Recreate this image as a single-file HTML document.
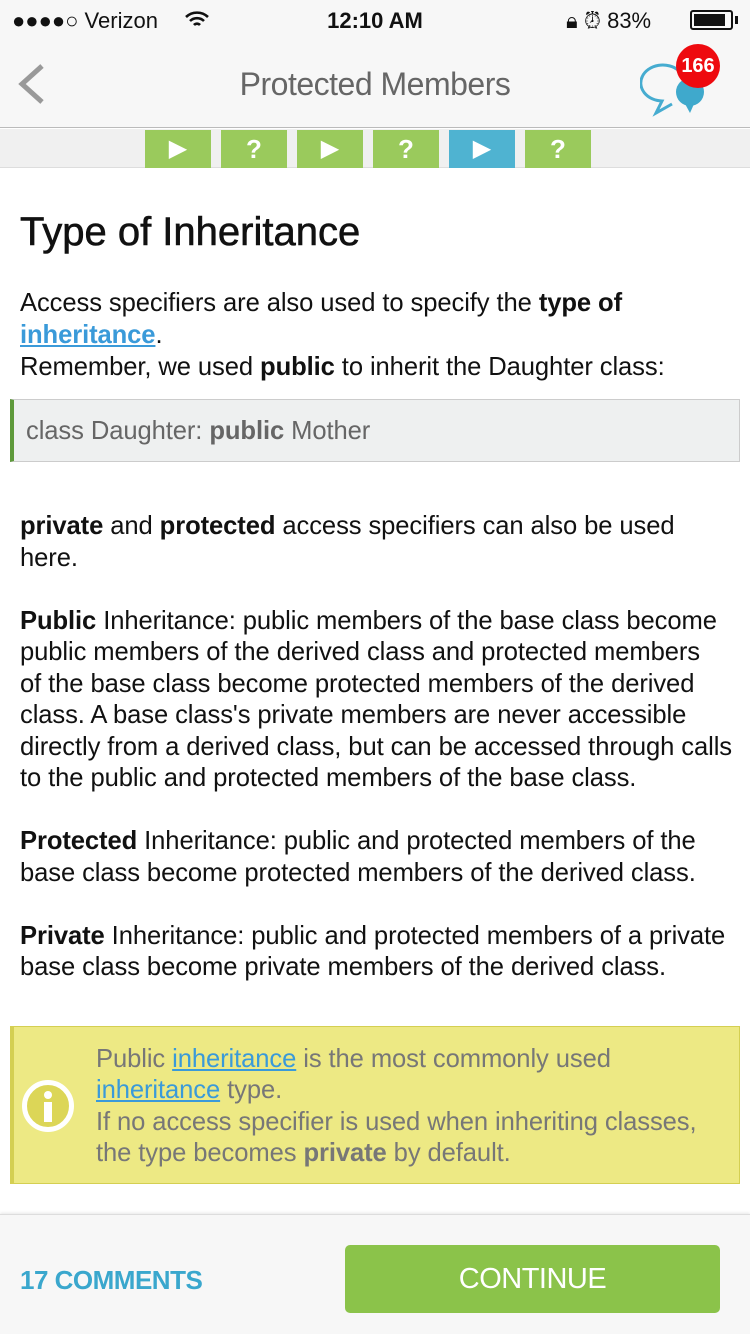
<!DOCTYPE html>
<html><head><meta charset="utf-8"><style>
*{margin:0;padding:0;box-sizing:border-box}
body{width:750px;height:1334px;position:relative;background:#fff;font-family:"Liberation Sans",sans-serif;overflow:hidden;color:#111}
.l{position:absolute;left:20px;white-space:nowrap;font-size:25.6px;line-height:32px;letter-spacing:-0.1px}
b{font-weight:bold}
a{color:#3a9ad9;text-decoration:underline}
</style></head><body>
<div style="position:absolute;left:0;top:0;width:750px;height:128px;background:#f7f7f7;border-bottom:1px solid #bbb"></div>
<div style="position:absolute;left:12px;top:8px;font-size:22px;line-height:26px">●●●●○ Verizon</div>
<svg style="position:absolute;left:184px;top:10px" width="26" height="20" viewBox="0 0 26 20"><path d="M2 7a16 16 0 0 1 22 0M6 11a10 10 0 0 1 14 0M10 15a4 4 0 0 1 6 0" stroke="#111" stroke-width="2.6" fill="none"/></svg>
<div style="position:absolute;left:0;width:750px;text-align:center;top:8px;font-size:22px;font-weight:bold;line-height:26px">12:10 AM</div>
<div style="position:absolute;left:566px;top:8px;font-size:22px;line-height:26px">🔒︎ ⏰︎ 83%</div>
<div style="position:absolute;left:690px;top:10px;width:43px;height:20px;border:2px solid #111;border-radius:3px;padding:2px"><div style="width:31px;height:12px;background:#111"></div></div>
<div style="position:absolute;left:735px;top:16px;width:3px;height:8px;background:#111"></div>
<svg style="position:absolute;left:14px;top:62px" width="32" height="44"><path d="M28 4L8 22l20 18" stroke="#999" stroke-width="5" fill="none"/></svg>
<div style="position:absolute;left:0;width:750px;text-align:center;top:65px;font-size:32px;color:#666;line-height:38px;letter-spacing:-0.5px">Protected Members</div>
<svg style="position:absolute;left:640px;top:62px" width="70" height="56"><path d="M38 8a22 18 0 1 0-16 31l-6 12 16-9" stroke="#46acd0" stroke-width="3" fill="none"/><circle cx="50" cy="30" r="14" fill="#3fa9cc"/><path d="M44 40l6 11 4-9z" fill="#3fa9cc"/></svg>
<div style="position:absolute;left:676px;top:44px;width:44px;height:44px;border-radius:50%;background:#ee0a0f;color:#fff;font-weight:bold;font-size:20px;text-align:center;line-height:44px">166</div>
<div style="position:absolute;left:0;top:129px;width:750px;height:39px;background:#f0f0f0;border-bottom:1px solid #ddd"></div>
<div style="position:absolute;left:145px;top:130px;display:flex;gap:10px">
<div style="width:66px;height:38px;background:#9aca5c;color:#fff;font-size:24px;text-align:center;line-height:38px">▶</div>
<div style="width:66px;height:38px;background:#9aca5c;color:#fff;font-size:26px;font-weight:bold;text-align:center;line-height:38px">?</div>
<div style="width:66px;height:38px;background:#9aca5c;color:#fff;font-size:24px;text-align:center;line-height:38px">▶</div>
<div style="width:66px;height:38px;background:#9aca5c;color:#fff;font-size:26px;font-weight:bold;text-align:center;line-height:38px">?</div>
<div style="width:66px;height:38px;background:#4fb3d1;color:#fff;font-size:24px;text-align:center;line-height:38px">▶</div>
<div style="width:66px;height:38px;background:#9aca5c;color:#fff;font-size:26px;font-weight:bold;text-align:center;line-height:38px">?</div>
</div>
<div style="position:absolute;left:20px;top:208px;font-size:40px;line-height:48px;color:#111;-webkit-text-stroke:0.6px #111">Type of Inheritance</div>
<div class="l" style="top:287px">Access specifiers are also used to specify the <b>type of</b></div>
<div class="l" style="top:319px"><a><b>inheritance</b></a>.</div>
<div class="l" style="top:351px">Remember, we used <b>public</b> to inherit the Daughter class:</div>
<div style="position:absolute;left:10px;top:399px;width:730px;height:63px;background:#eef0f0;border:1px solid #ccc;border-left:4px solid #5e9a3b"></div>
<div class="l" style="left:26px;top:415px;color:#666">class Daughter: <b>public</b> Mother</div>
<div class="l" style="top:510px"><b>private</b> and <b>protected</b> access specifiers can also be used</div>
<div class="l" style="top:542px">here.</div>
<div class="l" style="top:605px"><b>Public</b> Inheritance: public members of the base class become</div>
<div class="l" style="top:636px">public members of the derived class and protected members</div>
<div class="l" style="top:668px">of the base class become protected members of the derived</div>
<div class="l" style="top:699px">class. A base class's private members are never accessible</div>
<div class="l" style="top:731px">directly from a derived class, but can be accessed through calls</div>
<div class="l" style="top:762px">to the public and protected members of the base class.</div>
<div class="l" style="top:825px"><b>Protected</b> Inheritance: public and protected members of the</div>
<div class="l" style="top:857px">base class become protected members of the derived class.</div>
<div class="l" style="top:920px"><b>Private</b> Inheritance: public and protected members of a private</div>
<div class="l" style="top:951px">base class become private members of the derived class.</div>
<div style="position:absolute;left:10px;top:1026px;width:730px;height:158px;background:#ede984;border:1px solid #d4cf52;border-left:4px solid #d4cf52"></div>
<div style="position:absolute;left:22px;top:1080px;width:52px;height:52px;border-radius:50%;background:#dcd657;border:5px solid #fff"></div>
<div style="position:absolute;left:44px;top:1091px;width:8px;height:8px;border-radius:50%;background:#fff"></div>
<div style="position:absolute;left:44px;top:1102px;width:8px;height:20px;background:#fff"></div>
<div class="l" style="left:96px;top:1043px;color:#777">Public <a>inheritance</a> is the most commonly used</div>
<div class="l" style="left:96px;top:1074px;color:#777"><a>inheritance</a> type.</div>
<div class="l" style="left:96px;top:1106px;color:#777">If no access specifier is used when inheriting classes,</div>
<div class="l" style="left:96px;top:1137px;color:#777">the type becomes <b>private</b> by default.</div>
<div style="position:absolute;left:0;top:1214px;width:750px;height:120px;background:#f7f7f7;border-top:1px solid #ddd;box-shadow:0 -1px 3px rgba(0,0,0,.1)"></div>
<div style="position:absolute;left:20px;top:1264px;font-size:26px;font-weight:bold;color:#3aa7cd;line-height:32px;letter-spacing:-0.5px">17 COMMENTS</div>
<div style="position:absolute;left:345px;top:1245px;width:375px;height:68px;border-radius:5px;background:#8bc34a;color:#fff;font-size:29px;text-align:center;line-height:68px;letter-spacing:-0.5px">CONTINUE</div>
</body></html>
